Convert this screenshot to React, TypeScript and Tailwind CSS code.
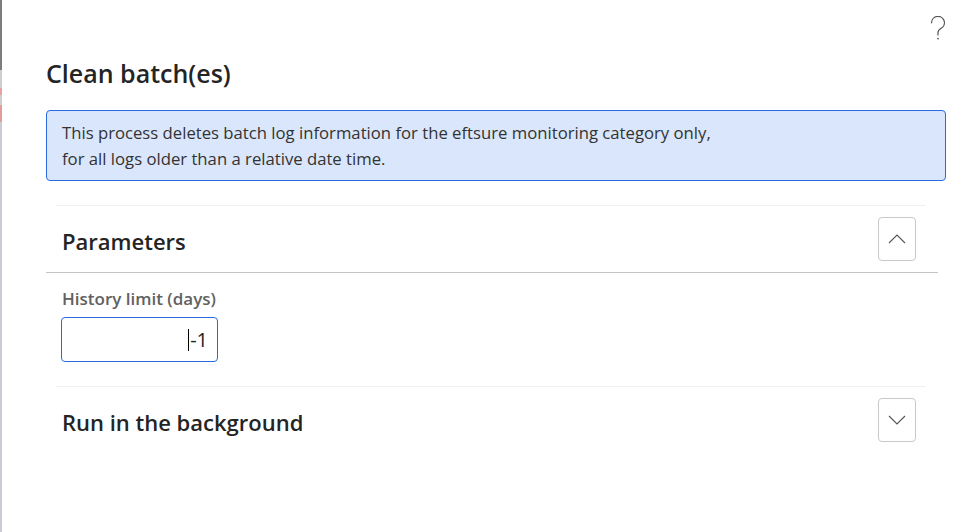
import type { ReactNode } from "react";

/* -------------------------------------------------------------------------- */
/*  Icons                                                                     */
/* -------------------------------------------------------------------------- */

function HelpIcon() {
  return (
    <svg width="16" height="25" viewBox="0 0 16 25" fill="none" aria-hidden>
      <path
        d="M1.6 6.8a6.4 6.4 0 1 1 9.6 5.5c-1.9 1.1-3.2 2.3-3.2 4.5v2.2"
        stroke="#555"
        strokeWidth="1.2"
        strokeLinecap="round"
      />
      <circle cx="8" cy="22.6" r="0.9" fill="#555" />
    </svg>
  );
}

function Chevron({ up }: { up: boolean }) {
  return (
    <svg width="18" height="10" viewBox="0 0 18 10" fill="none" aria-hidden>
      <path
        d={up ? "M1 9L9 1l8 8" : "M1 1l8 8 8-8"}
        stroke="#555"
        strokeWidth="1.1"
      />
    </svg>
  );
}

/* -------------------------------------------------------------------------- */
/*  Pieces                                                                    */
/* -------------------------------------------------------------------------- */

// Thin sliver of the page that sits behind the dialog
function EdgeStrip() {
  return (
    <div className="flex w-[2px] flex-col">
      <div className="h-[70px] bg-[#7d7d7d]" />
      <div className="h-[18px] bg-[#cfcfcf]" />
      <div className="h-[7px] bg-[#e3a3a3]" />
      <div className="h-[10px] bg-[#cfcfcf]" />
      <div className="h-[17px] bg-[#e39c9c]" />
      <div className="flex-1 bg-[#cbcbd3]" />
    </div>
  );
}

function Separator() {
  return <div className="ml-[10px] mr-[20px] h-px bg-[#f0f0f0]" />;
}

function SectionHeader({ title, open }: { title: string; open: boolean }) {
  return (
    <div className="flex h-[66px] items-center justify-between pl-[16px] pr-[30px]">
      <h2 className="mt-[4px] text-[22px] leading-[28px] font-semibold">{title}</h2>
      <button
        type="button"
        className="flex h-[44px] w-[38px] items-center justify-center rounded-[4px] border border-[#c9c9c9] bg-white"
      >
        <Chevron up={open} />
      </button>
    </div>
  );
}

function Field({ label, children }: { label: string; children: ReactNode }) {
  return (
    <div className="flex flex-col">
      <label className="ml-[16px] text-[17px] leading-[22px] font-semibold text-[#616161]">
        {label}
      </label>
      {children}
    </div>
  );
}

/* -------------------------------------------------------------------------- */
/*  Dialog                                                                    */
/* -------------------------------------------------------------------------- */

export default function App() {
  return (
    <div className="flex h-[532px] w-[976px] overflow-hidden bg-white font-['Open_Sans',sans-serif] text-[#242424]">
      <EdgeStrip />
      <div className="flex flex-1 flex-col pl-[44px] pr-[30px]">
        <div className="flex h-[57px] justify-end pt-[16px]">
          <HelpIcon />
        </div>

        <h1 className="text-[25px] leading-[32px] font-semibold">Clean batch(es)</h1>

        <div className="mt-[21px] rounded-[4px] border border-[#2a6ae0] bg-[#dae6fb] px-[15px] pt-[9px] pb-[8px] text-[16.7px] leading-[26px] text-[#333]">
          This process deletes batch log information for the eftsure monitoring category only,
          <br />
          for all logs older than a relative date time.
        </div>

        <div className="mt-[24px]">
          <Separator />
        </div>
        <SectionHeader title="Parameters" open />
        <div className="mr-[8px] h-px bg-[#c4c4c4]" />

        <div className="mt-[15px]">
          <Field label="History limit (days)">
            <div className="mt-[7px] ml-[15px] flex h-[45px] w-[157px] items-center justify-end rounded-[4px] border border-[#2a6ae0] bg-white pr-[9px]">
              <span className="mr-[1px] h-[22px] w-px bg-black" />
              <span className="text-[20px] leading-[24px] text-[#242424]">-1</span>
            </div>
          </Field>
        </div>

        <div className="mt-[24px]">
          <Separator />
        </div>
        <SectionHeader title="Run in the background" open={false} />
      </div>
    </div>
  );
}
